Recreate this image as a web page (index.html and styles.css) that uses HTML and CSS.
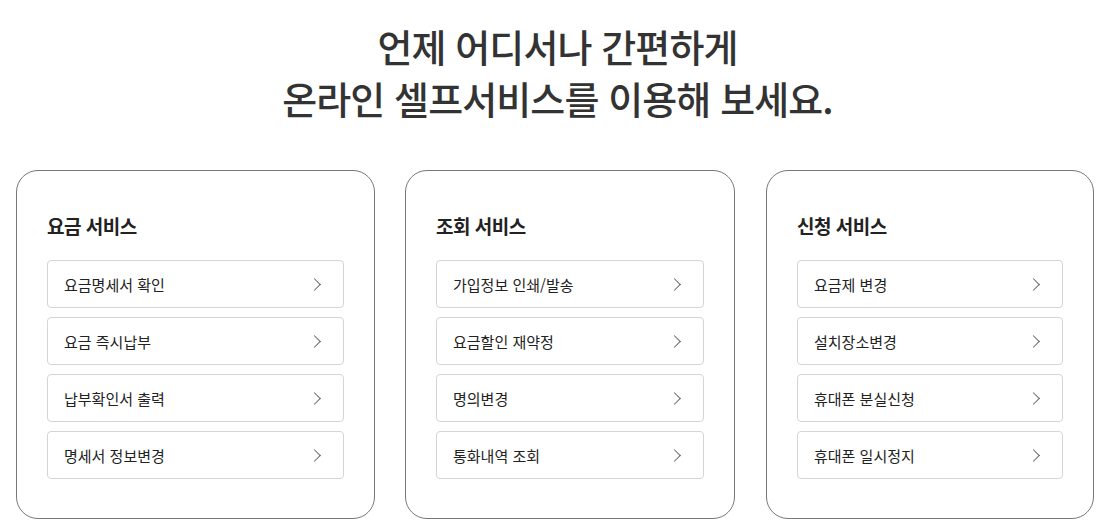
FILE: index.html
```html
<!DOCTYPE html>
<html lang="ko">
<head>
    <meta charset="UTF-8">
    <meta name="viewport" content="width=device-width, initial-scale=1.0">
    <title>셀프서비스</title>
    <link rel="stylesheet" href="styles.css">
</head>
<body>
    <h1 class="title">언제 어디서나 간편하게<br>온라인 셀프서비스를 이용해 보세요.</h1>

    <div class="cards">
        <div class="card">
            <h2>요금 서비스</h2>
            <ul class="links">
                <li><a href="#">요금명세서 확인<span class="chev"></span></a></li>
                <li><a href="#">요금 즉시납부<span class="chev"></span></a></li>
                <li><a href="#">납부확인서 출력<span class="chev"></span></a></li>
                <li><a href="#">명세서 정보변경<span class="chev"></span></a></li>
            </ul>
        </div>
        <div class="card">
            <h2>조회 서비스</h2>
            <ul class="links">
                <li><a href="#">가입정보 인쇄/발송<span class="chev"></span></a></li>
                <li><a href="#">요금할인 재약정<span class="chev"></span></a></li>
                <li><a href="#">명의변경<span class="chev"></span></a></li>
                <li><a href="#">통화내역 조회<span class="chev"></span></a></li>
            </ul>
        </div>
        <div class="card">
            <h2>신청 서비스</h2>
            <ul class="links">
                <li><a href="#">요금제 변경<span class="chev"></span></a></li>
                <li><a href="#">설치장소변경<span class="chev"></span></a></li>
                <li><a href="#">휴대폰 분실신청<span class="chev"></span></a></li>
                <li><a href="#">휴대폰 일시정지<span class="chev"></span></a></li>
            </ul>
        </div>
    </div>
</body>
</html>
```

FILE: styles.css
```css
body {
    margin: 0;
    padding: 0;
    background-color: #fff;
    font-family: "Noto Sans CJK KR", "Noto Sans", sans-serif;
    color: #333;
}

.title {
    margin: 20px 0 0;
    text-align: center;
    font-size: 38px;
    font-weight: 500;
    line-height: 52px;
    letter-spacing: -0.9px;
    color: #333;
}

.cards {
    display: grid;
    grid-template-columns: 359px 330px 329px;
    column-gap: 30px;
    padding-left: 16px;
    margin-top: 46px;
}

.card:last-child {
    margin-left: 1px;
}

.card {
    border: 1px solid #777;
    border-radius: 22px;
    padding: 40px 30px 37px;
    box-sizing: border-box;
    height: 349px;
}

.card h2 {
    margin: 0 0 19px;
    font-size: 19px;
    font-weight: 700;
    letter-spacing: -0.5px;
    line-height: 30px;
    color: #222;
}

.links {
    list-style: none;
    margin: 0;
    padding: 0;
    display: flex;
    flex-direction: column;
    gap: 9px;
}

.links a {
    display: flex;
    align-items: center;
    justify-content: space-between;
    height: 48px;
    box-sizing: border-box;
    padding: 0 24px 0 16px;
    border: 1px solid #d5d5d5;
    border-radius: 4px;
    font-size: 15px;
    color: #222;
    text-decoration: none;
}

.chev {
    width: 8px;
    height: 8px;
    border-top: 1px solid #666;
    border-right: 1px solid #666;
    transform: rotate(45deg);
}
```
